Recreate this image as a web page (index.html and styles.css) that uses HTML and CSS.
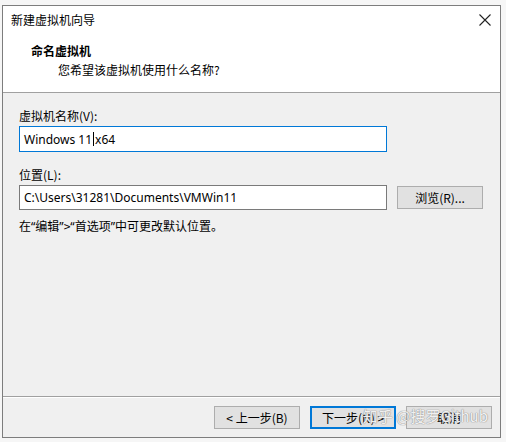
FILE: index.html
```html
<!DOCTYPE html>
<html lang="zh-CN">
<head>
<meta charset="utf-8">
<title>新建虚拟机向导</title>
<link rel="stylesheet" href="styles.css">
</head>
<body>
<div class="window">
  <div class="header">
    <div class="titlebar">
      <span class="title">新建虚拟机向导</span>
      <svg class="close" width="12" height="12" viewBox="0 0 12 12"><path d="M0.5 0.5L11.5 11.5M11.5 0.5L0.5 11.5" stroke="#222" stroke-width="1.1" fill="none"/></svg>
    </div>
    <div class="heading">命名虚拟机</div>
    <div class="subheading">您希望该虚拟机使用什么名称?</div>
  </div>
  <div class="body">
    <div class="label">虚拟机名称(V):</div>
    <div class="input focused">Windows 11<span class="caret"></span>x64</div>
    <div class="label second">位置(L):</div>
    <div class="row">
      <div class="input">C:\Users\31281\Documents\VMWin11</div>
      <div class="btn browse">浏览(R)...</div>
    </div>
    <div class="note">在<span class="q">“</span>编辑<span class="q">”</span>&gt;<span class="q">“</span>首选项<span class="q">”</span>中可更改默认位置。</div>
  </div>
  <div class="footer">
    <div class="btn">&lt; 上一步(B)</div>
    <div class="btn default">下一步(N) &gt;</div>
    <div class="btn">取消</div>
    <div class="watermark">知乎 @搜罗Github</div>
  </div>
</div>
</body>
</html>
```
FILE: styles.css
```css
html, body {
  margin: 0;
  padding: 0;
}
body {
  background: #f6f6f6;
  padding: 5px 5px 4px 2px;
  font-family: "Noto Sans CJK SC", "Noto Sans", sans-serif;
  font-size: 12px;
  color: #000;
}
.window {
  box-sizing: border-box;
  width: 499px;
  height: 433px;
  border: 1px solid #7d7d7d;
  background: #f0f0f0;
  display: flex;
  flex-direction: column;
  position: relative;
}
.header {
  background: #fff;
  height: 86px;
  border-bottom: 1px solid #a0a0a0;
  flex: none;
}
.titlebar {
  height: 28px;
  display: flex;
  align-items: center;
  justify-content: space-between;
  padding: 0 9px 0 8px;
}
.title {
  line-height: 16px;
}
.heading {
  font-weight: bold;
  padding-left: 28px;
  margin-top: 9px;
  line-height: 16px;
}
.subheading {
  padding-left: 55px;
  margin-top: 3px;
  line-height: 16px;
}
.body {
  flex: 1;
  padding: 15px 0 0 16px;
  border-bottom: 1px solid #a0a0a0;
  box-shadow: 0 1px 0 #fff;
}
.label {
  line-height: 16px;
  margin-bottom: 2px;
}
.label.second {
  margin-top: 15px;
}
.input {
  box-sizing: border-box;
  width: 368px;
  height: 25px;
  border: 1px solid #7a7a7a;
  background: #fff;
  padding: 0 0 0 4px;
  display: flex;
  align-items: center;
  font-family: "Noto Sans", "Noto Sans CJK SC", sans-serif;
  font-size: 12px;
}
.input.focused {
  border-color: #0078d7;
  height: 26px;
}
.caret {
  display: inline-block;
  width: 1px;
  height: 14px;
  background: #000;
  margin: 0 1px;
}
.row {
  display: flex;
  align-items: center;
  gap: 10px;
}
.btn {
  box-sizing: border-box;
  width: 86px;
  height: 23px;
  border: 1px solid #adadad;
  background: #e1e1e1;
  display: flex;
  align-items: center;
  justify-content: center;
  font-size: 12px;
}
.btn.default {
  border: 2px solid #0078d7;
}
.note {
  margin-top: 8px;
  line-height: 16px;
}
.q {
  font-family: "Noto Sans", sans-serif;
}
.footer {
  height: 40px;
  flex: none;
  display: flex;
  justify-content: flex-end;
  align-items: center;
  gap: 10px;
  padding-right: 8px;
  position: relative;
}
.watermark {
  position: absolute;
  right: 12px;
  top: 8px;
  font-size: 15px;
  color: rgba(255, 255, 255, 0.9);
  text-shadow: 0 0 1px #8a8a8a, 0 0 1px #8a8a8a;
  pointer-events: none;
  font-family: "Noto Sans CJK SC", "Noto Sans", sans-serif;
}
```
